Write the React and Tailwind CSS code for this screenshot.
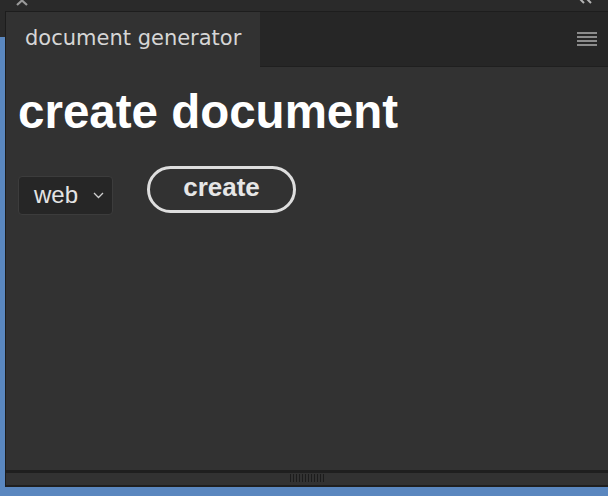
import React from "react";

const Hamburger = () => (
  <div className="flex flex-col gap-[2px] w-[20px]">
    <div className="h-[2px] bg-[#8c8c8c]" />
    <div className="h-[2px] bg-[#8c8c8c]" />
    <div className="h-[2px] bg-[#8c8c8c]" />
    <div className="h-[2px] bg-[#8c8c8c]" />
  </div>
);

export default function App() {
  return (
    <div className="w-[608px] h-[496px] bg-[#5a87bf] flex flex-col overflow-hidden" style={{ fontFamily: '"Liberation Sans", Arial, sans-serif' }}>
      {/* top strip of the host window */}
      <div className="h-[11px] shrink-0 bg-[#2a2a2a] flex items-start justify-between pl-[16px] pr-[15px] overflow-hidden">
        <svg width="12" height="11" viewBox="0 0 12 11" className="-mt-[5px]">
          <path d="M1 1 L11 10 M11 1 L1 10" stroke="#9a9a9a" strokeWidth="2.2" />
        </svg>
        <svg width="14" height="6" viewBox="0 0 14 6" className="-mt-[1px]">
          <path d="M1 0 L5 4 M8 0 L12 4" stroke="#b4b4b4" strokeWidth="2" />
        </svg>
      </div>

      <div className="flex flex-1">
        <div className="w-[5px] flex flex-col">
          <div className="h-[26px] bg-[#2a2a2a]" />
        </div>

        {/* panel */}
        <div className="flex-1 flex flex-col bg-[#323232] border-l border-[#1c1c1c] border-b-2 border-b-[#1f1f1f]">
          <div className="h-[56px] shrink-0 bg-[#262626] border-t border-[#1d1d1d] flex">
            <div className="w-[254px] bg-[#323232] flex items-center pl-[19px] pb-[1px]">
              <span className="text-[21px] text-[#d6d6d6]" style={{ fontFamily: '"DejaVu Sans", sans-serif' }}>
                document generator
              </span>
            </div>
            <div className="flex-1 border-b border-[#1f1f1f] flex items-center justify-end pr-[11px] pb-[1px]">
              <Hamburger />
            </div>
          </div>

          <div className="flex-1 px-[12px]">
            <h1 className="mt-[21px] text-[47.5px] leading-none font-bold text-white">create document</h1>
            <div className="mt-[30px] flex items-start">
              <div className="mt-[10px] w-[95px] h-[39px] bg-[#262626] border border-[#3c3c3c] rounded-[4px] flex items-center pl-[15px] pr-[8px] justify-between">
                <span className="text-[24px] text-[#e4e4e4] leading-none">web</span>
                <svg width="11" height="7" viewBox="0 0 11 7">
                  <path d="M1 1 L5.5 5.5 L10 1" fill="none" stroke="#cfcfcf" strokeWidth="1.3" />
                </svg>
              </div>
              <button className="ml-[34px] w-[149px] h-[47px] rounded-full border-[3px] border-[#dedede] text-[#e6e6e6] text-[26px] font-bold leading-none pb-[4px]">
                create
              </button>
            </div>
          </div>

          <div className="h-[3px] bg-[#1f1f1f]" />
          <div className="h-[12px] flex justify-center pt-[1px]">
            <div className="flex gap-[2px]">
              {Array.from({ length: 12 }).map((_, i) => (
                <div key={i} className="w-[1px] h-[8px] bg-[#1c1c1c]" />
              ))}
            </div>
          </div>
        </div>
      </div>
      <div className="h-[9px] shrink-0" />
    </div>
  );
}
